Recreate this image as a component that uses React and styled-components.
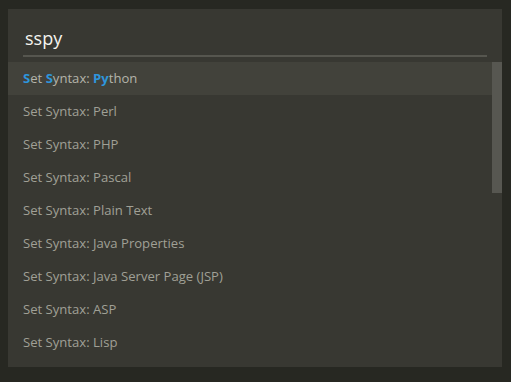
import React from "react";
import styled, { createGlobalStyle } from "styled-components";

const GlobalStyle = createGlobalStyle`
	html, body {
		margin: 0;
		padding: 0;
		background: #272822;
		width: 511px;
		height: 382px;
		overflow: hidden;
	}
	* {
		box-sizing: border-box;
	}
`;

const items = [
	[["S", true], ["et ", false], ["S", true], ["yntax: ", false], ["Py", true], ["thon", false]],
	"Set Syntax: Perl",
	"Set Syntax: PHP",
	"Set Syntax: Pascal",
	"Set Syntax: Plain Text",
	"Set Syntax: Java Properties",
	"Set Syntax: Java Server Page (JSP)",
	"Set Syntax: ASP",
	"Set Syntax: Lisp",
];

function App() {
	return (
		<Page>
			<GlobalStyle />
			<Panel>
				<Search>
					<Query>sspy</Query>
				</Search>
				<List>
					<Items>
						{items.map((item, i) => (
							<Row key={i} $selected={i === 0}>
								{Array.isArray(item)
									? item.map(([txt, hit], j) =>
											hit ? <Match key={j}>{txt}</Match> : <span key={j}>{txt}</span>
									  )
									: item}
							</Row>
						))}
					</Items>
					<Scrollbar>
						<Thumb />
					</Scrollbar>
				</List>
			</Panel>
		</Page>
	);
}

const Page = styled.main`
	padding: 9px 9px 0 8px;
	font-family: "Open Sans", "Noto Sans", sans-serif;
`;

const Panel = styled.section`
	background: #383832;
	height: 358px;
	display: flex;
	flex-direction: column;
`;

const Search = styled.div`
	padding: 14px 15px 0 15px;
	margin-bottom: 5px;
`;

const Query = styled.div`
	height: 34px;
	border-bottom: 2px solid #56564f;
	color: #f4f4ee;
	font-size: 18px;
	line-height: 30px;
	padding-left: 2px;
`;

const List = styled.div`
	display: flex;
	flex: 1;
`;

const Items = styled.ul`
	list-style: none;
	margin: 0;
	padding: 0;
	flex: 1;
`;

const Row = styled.li`
	height: 33px;
	line-height: 33px;
	padding-left: 15px;
	font-size: 13.1px;
	white-space: pre;
	color: ${(p) => (p.$selected ? "#b4b4aa" : "#a0a096")};
	background: ${(p) => (p.$selected ? "#42423b" : "transparent")};
`;

const Match = styled.span`
	color: #2e95dc;
	font-weight: 700;
`;

const Scrollbar = styled.div`
	width: 10px;
`;

const Thumb = styled.div`
	height: 131px;
	background: #575751;
`;

export default App;
